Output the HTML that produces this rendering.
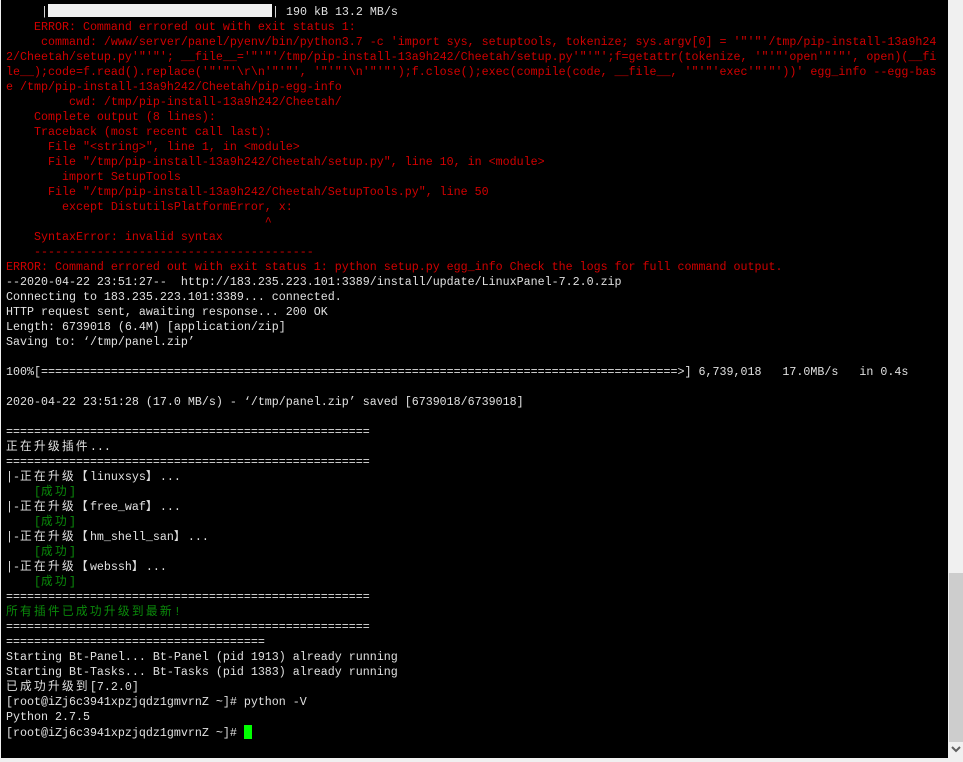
<!DOCTYPE html>
<html><head><meta charset="utf-8"><style>
html,body{margin:0;padding:0;width:963px;height:762px;overflow:hidden;background:#f0f0f0}
#t{position:absolute;left:1px;top:0;width:947px;height:758px;background:#000}
pre{position:absolute;left:6px;top:4px;margin:0;font-family:"Liberation Mono","Noto Sans CJK SC",monospace;font-size:11.67px;line-height:15px;color:#e0e0e0;white-space:pre}
.r{color:#d00000}.g{color:#0a8a0a}
.c{letter-spacing:2.33px}
.bar{display:inline-block;width:224px;height:13px;background:#f0f0f0;vertical-align:-2px}
.cur{display:inline-block;width:8px;height:14px;background:#00ff00;vertical-align:-3px}
#sb{position:absolute;left:948px;top:0;width:15px;height:758px;background:#f0f0f0}
#th{position:absolute;left:949px;top:573px;width:14px;height:169px;background:#cdcdcd}
</style></head><body>
<div id="t"></div>
<div id="sb"></div><div id="th"></div>
<svg style="position:absolute;left:950px;top:745px" width="12" height="10"><path d="M2 2 L6 6 L10 2" stroke="#606060" stroke-width="2" fill="none"/></svg>
<pre>     |<span class="bar"></span>| 190 kB 13.2 MB/s
<span class="r">    ERROR: Command errored out with exit status 1:
     command: /www/server/panel/pyenv/bin/python3.7 -c 'import sys, setuptools, tokenize; sys.argv[0] = '"'"'/tmp/pip-install-13a9h24
2/Cheetah/setup.py'"'"'; __file__='"'"'/tmp/pip-install-13a9h242/Cheetah/setup.py'"'"';f=getattr(tokenize, '"'"'open'"'"', open)(__fi
le__);code=f.read().replace('"'"'\r\n'"'"', '"'"'\n'"'"');f.close();exec(compile(code, __file__, '"'"'exec'"'"'))' egg_info --egg-bas
e /tmp/pip-install-13a9h242/Cheetah/pip-egg-info
         cwd: /tmp/pip-install-13a9h242/Cheetah/
    Complete output (8 lines):
    Traceback (most recent call last):
      File "&lt;string&gt;", line 1, in &lt;module&gt;
      File "/tmp/pip-install-13a9h242/Cheetah/setup.py", line 10, in &lt;module&gt;
        import SetupTools
      File "/tmp/pip-install-13a9h242/Cheetah/SetupTools.py", line 50
        except DistutilsPlatformError, x:
                                     ^
    SyntaxError: invalid syntax
    ----------------------------------------
ERROR: Command errored out with exit status 1: python setup.py egg_info Check the logs for full command output.</span>
--2020-04-22 23:51:27--  http://183.235.223.101:3389/install/update/LinuxPanel-7.2.0.zip
Connecting to 183.235.223.101:3389... connected.
HTTP request sent, awaiting response... 200 OK
Length: 6739018 (6.4M) [application/zip]
Saving to: ‘/tmp/panel.zip’

100%[===========================================================================================>] 6,739,018   17.0MB/s   in 0.4s

2020-04-22 23:51:28 (17.0 MB/s) - ‘/tmp/panel.zip’ saved [6739018/6739018]

====================================================
<span class="c">正在升级插件</span>...
====================================================
|-<span class="c">正在升级【</span>linuxsys<span class="c">】</span>...
<span class="g">    [<span class="c">成功</span>]</span>
|-<span class="c">正在升级【</span>free_waf<span class="c">】</span>...
<span class="g">    [<span class="c">成功</span>]</span>
|-<span class="c">正在升级【</span>hm_shell_san<span class="c">】</span>...
<span class="g">    [<span class="c">成功</span>]</span>
|-<span class="c">正在升级【</span>webssh<span class="c">】</span>...
<span class="g">    [<span class="c">成功</span>]</span>
====================================================
<span class="g"><span class="c">所有插件已成功升级到最新</span>!</span>
====================================================
=====================================
Starting Bt-Panel... Bt-Panel (pid 1913) already running
Starting Bt-Tasks... Bt-Tasks (pid 1383) already running
<span class="c">已成功升级到</span>[7.2.0]
[root@iZj6c3941xpzjqdz1gmvrnZ ~]# python -V
Python 2.7.5
[root@iZj6c3941xpzjqdz1gmvrnZ ~]# <span class="cur"></span></pre>
</body></html>
